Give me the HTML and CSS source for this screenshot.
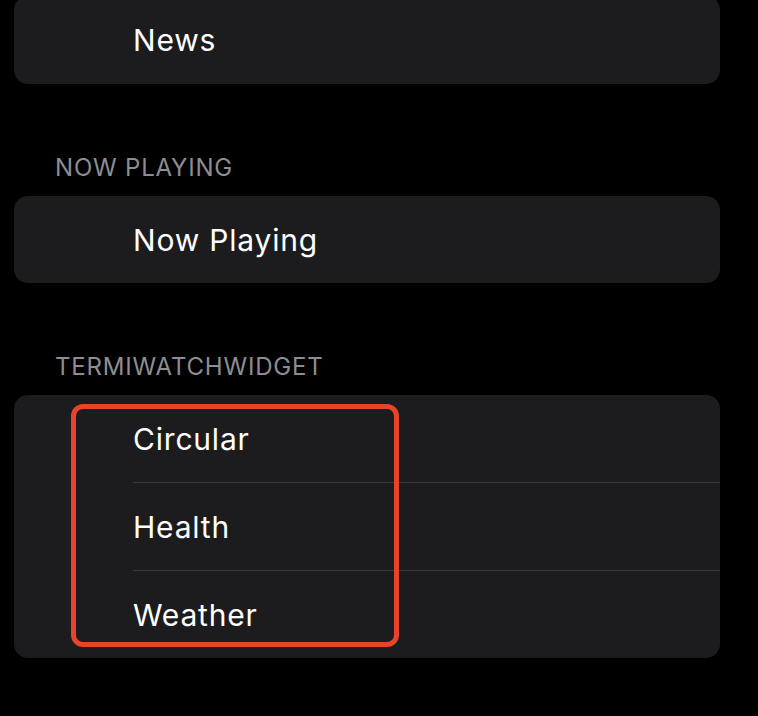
FILE: index.html
```html
<!DOCTYPE html>
<html>
<head>
<meta charset="utf-8">
<link rel="stylesheet" href="styles.css">
</head>
<body>
<div class="page">
  <div class="card card-first">
    <div class="row"><div class="row-inner">News</div></div>
  </div>
  <div class="section-header">NOW PLAYING</div>
  <div class="card">
    <div class="row"><div class="row-inner">Now Playing</div></div>
  </div>
  <div class="section-header">TERMIWATCHWIDGET</div>
  <div class="card card-highlighted">
    <div class="row"><div class="row-inner">Circular</div></div>
    <div class="row"><div class="row-inner sep">Health</div></div>
    <div class="row"><div class="row-inner sep">Weather</div></div>
    <div class="highlight"></div>
  </div>
</div>
</body>
</html>
```
FILE: styles.css
```css
html, body {
  margin: 0;
  padding: 0;
  background: #000;
}
body {
  font-family: Inter, "Noto Sans", sans-serif;
  color: #fff;
  overflow: hidden;
  height: 716px;
}
.page {
  padding: 0 38px 0 14px;
}
.card {
  background: #1c1c1e;
  border-radius: 14px;
}
.card-first {
  margin-top: -4px;
}
.card-highlighted {
  position: relative;
}
.row {
  padding-left: 119px;
}
.row-inner {
  height: 87px;
  display: flex;
  align-items: center;
  font-size: 30px;
  letter-spacing: 0.8px;
}
.card-first .row-inner {
  height: 88px;
}
.row-inner.sep {
  border-top: 1px solid #38383a;
}
.section-header {
  height: 112px;
  box-sizing: border-box;
  display: flex;
  align-items: flex-end;
  padding: 0 0 16px 41px;
  font-size: 24px;
  line-height: 25px;
  letter-spacing: 0.8px;
  color: #8d8d93;
}
.highlight {
  position: absolute;
  left: 57px;
  top: 9px;
  width: 328px;
  height: 243px;
  box-sizing: border-box;
  border: 5px solid #e8432b;
  border-radius: 12px;
}
```
